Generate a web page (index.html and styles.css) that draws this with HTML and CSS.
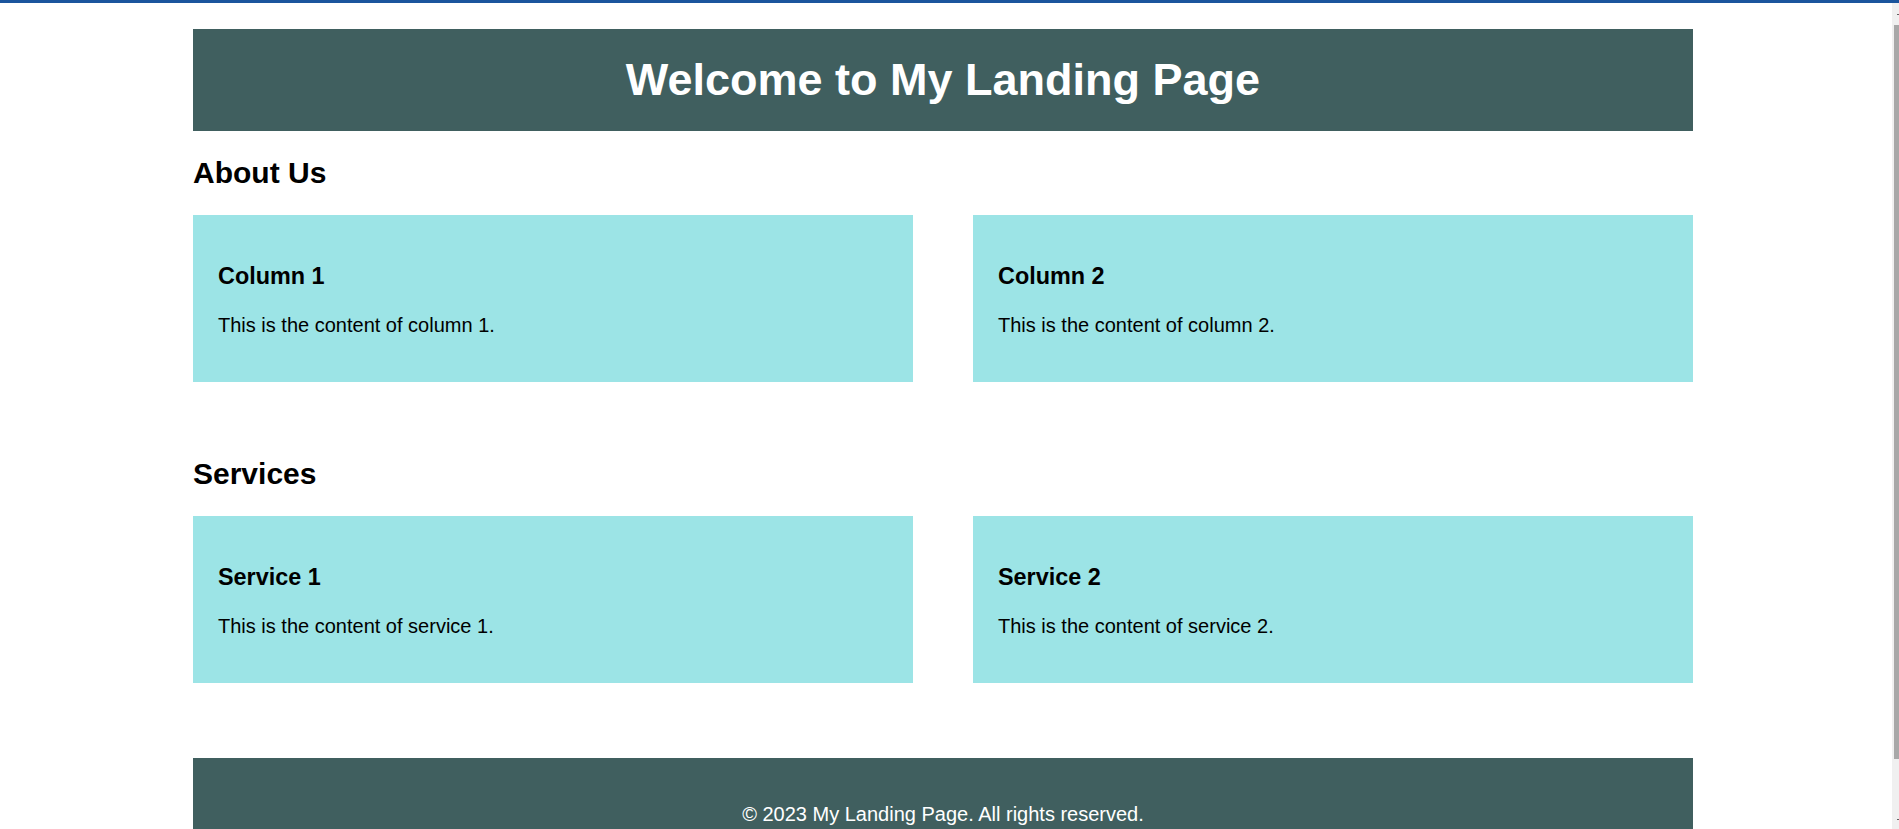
FILE: index.html
```html
<!DOCTYPE html>
<html lang="en">
<head>
<meta charset="utf-8">
<title>My Landing Page</title>
<link rel="stylesheet" href="styles.css">
</head>
<body>
<div class="chrome-bar"></div>
<div class="window">
  <div class="scroller">
    <div class="page">
      <header class="hero">
        <h1 class="hero-title">Welcome to My Landing Page</h1>
      </header>

      <section class="section">
        <h2 class="section-title">About Us</h2>
        <div class="row">
          <div class="card">
            <h3 class="card-title">Column 1</h3>
            <p class="card-text">This is the content of column 1.</p>
          </div>
          <div class="card">
            <h3 class="card-title">Column 2</h3>
            <p class="card-text">This is the content of column 2.</p>
          </div>
        </div>
      </section>

      <section class="section">
        <h2 class="section-title">Services</h2>
        <div class="row">
          <div class="card">
            <h3 class="card-title">Service 1</h3>
            <p class="card-text">This is the content of service 1.</p>
          </div>
          <div class="card">
            <h3 class="card-title">Service 2</h3>
            <p class="card-text">This is the content of service 2.</p>
          </div>
        </div>
      </section>

      <footer class="footer">
        <p class="footer-text">&copy; 2023 My Landing Page. All rights reserved.</p>
      </footer>
    </div>
  </div>
  <div class="scrollbar" aria-hidden="true">
    <div class="scroll-btn"><span class="scroll-arrow"></span></div>
    <div class="scroll-thumb"></div>
    <div class="scroll-space"></div>
    <div class="scroll-btn scroll-btn-end"><span class="scroll-arrow"></span></div>
  </div>
</div>
</body>
</html>
```

FILE: styles.css
```css
html,
body {
  margin: 0;
  height: 100%;
  overflow: hidden;
}

body {
  display: flex;
  flex-direction: column;
  font-family: "Liberation Sans", Arial, sans-serif;
  font-size: 20px;
  color: #000;
  background: #fff;
}

.chrome-bar {
  flex: none;
  height: 3px;
  background: #1b559d;
}

.window {
  flex: 1;
  min-height: 0;
  display: flex;
}

.scroller {
  flex: 1;
  min-width: 0;
  overflow: hidden;
  padding-right: 6px;
  background: #fff;
}

.scrollbar {
  flex: none;
  width: 7px;
  display: flex;
  flex-direction: column;
  align-items: flex-end;
  background: #f0f0f0;
}

.scroll-btn {
  flex: none;
  height: 22px;
  width: 5px;
  display: flex;
  align-items: center;
  justify-content: flex-end;
}

.scroll-btn-end {
  height: 20px;
}

.scroll-arrow {
  display: block;
  width: 2px;
  height: 1px;
  background: #606060;
}

.scroll-thumb {
  flex: none;
  width: 5px;
  height: 734px;
  background: #a8a8a8;
}

.scroll-space {
  flex: 1;
}

.page {
  width: 1500px;
  margin: 0 auto;
  padding: 26px 0 25px;
}

.hero {
  background: #405f5f;
  padding: 25px 0;
  text-align: center;
}

.hero-title {
  margin: 0;
  color: #fff;
  font-size: 45px;
  font-weight: bold;
  line-height: normal;
}

.section {
  padding-bottom: 50px;
}

.section-title {
  margin: 25px 0;
  font-size: 30px;
  font-weight: bold;
}

.row {
  display: flex;
  justify-content: space-between;
}

.card {
  box-sizing: border-box;
  width: 48%;
  padding: 25px;
  background: #9ce4e6;
}

.card-title {
  margin: 23.4px 0;
  font-size: 23.4px;
  font-weight: bold;
}

.card-text {
  margin: 20px 0;
  font-size: 20px;
}

.footer {
  margin-top: 25px;
  padding: 25px;
  background: #405f5f;
  color: #fff;
  text-align: center;
}

.footer-text {
  margin: 20px 0;
}
```
